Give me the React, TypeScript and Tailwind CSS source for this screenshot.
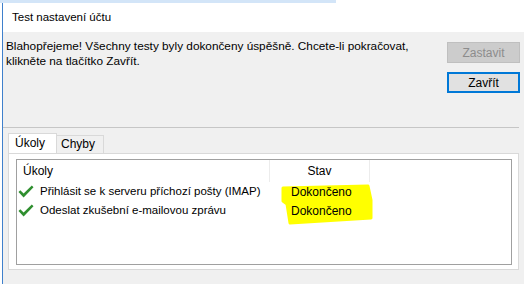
const Check = () => (
  <svg width="16" height="13" viewBox="0 0 16 13" className="shrink-0">
    <path d="M0.5 7 L2.3 5.2 L5.6 8.6 L13.8 0.5 L15.5 2.2 L5.6 12.4 Z" fill="#2f8f2f" />
  </svg>
);

const rows = ['Přihlásit se k serveru příchozí pošty (IMAP)', 'Odeslat zkušební e-mailovou zprávu'];

const App = () => {
  return (
    <div
      className="w-[524px] h-[284px] bg-white flex flex-col overflow-hidden text-[12px] text-black"
      style={{ fontFamily: '"Liberation Sans", Arial, sans-serif' }}
    >
      <div className="h-[3px] w-[336px] bg-[#d3e5f8] shrink-0" />
      <div className="flex-1 ml-[2px] border-l border-[#3f80cc] flex flex-col">
        <div className="h-[29px] bg-white flex items-center pl-[9px] text-[11.5px]">Test nastavení účtu</div>
        <div className="flex-1 bg-[#f0f0f0] flex flex-col">
          <div className="h-[95px] flex justify-between">
            <div className="pl-[3px] pt-[7px] leading-[15px] text-[11.8px] whitespace-nowrap">
              <div>Blahopřejeme! Všechny testy byly dokončeny úspěšně. Chcete-li pokračovat,</div>
              <div>klikněte na tlačítko Zavřít.</div>
            </div>
            <div className="flex flex-col gap-[9px] pt-[10px] pr-[4px]">
              <div className="w-[73px] h-[21px] bg-[#cccccc] border border-[#bfbfbf] text-[#8c8c8c] flex items-center justify-center">
                Zastavit
              </div>
              <div className="w-[73px] h-[21px] bg-[#e1e1e1] border-2 border-[#0078d7] flex items-center justify-center">
                Zavřít
              </div>
            </div>
          </div>
          <div className="h-px bg-[#c6c6c6] mr-[5px]" />
          <div className="flex items-end pl-[5px] mt-[5px] h-[20px]">
            <div className="w-[49px] h-[20px] bg-white border border-b-0 border-[#d9d9d9] pl-[6px] leading-[19px]">
              Úkoly
            </div>
            <div className="w-[47px] h-[18px] bg-[#f0f0f0] border border-l-0 border-b-0 border-[#d9d9d9] pl-[4px] leading-[17px]">
              Chyby
            </div>
          </div>
          <div className="ml-[5px] mr-[5px] h-[117px] bg-white border border-[#d9d9d9] pl-[7px] pr-[6px] pt-[5px] pb-[4px] flex">
            <div className="flex-1 border border-[#a0a0a0] relative">
              <svg className="absolute left-[263px] top-[23px]" width="96" height="44" viewBox="0 0 96 44">
                <path
                  d="M3 5 L88 3 L91 17 L91 35 L10 40 L7 21 L3 18 Z"
                  fill="#ffff00"
                  stroke="#ffff00"
                  strokeWidth="3"
                  strokeLinejoin="round"
                />
              </svg>
              <div className="relative flex h-[22px] items-center">
                <div className="w-[253px] h-full pl-[6px] flex items-center border-r border-[#ececec]">Úkoly</div>
                <div className="w-[100px] h-full flex items-center justify-center border-r border-[#ececec]">Stav</div>
              </div>
              {rows.map((r) => (
                <div key={r} className="relative flex h-[19px] items-center">
                  <div className="w-[253px] flex items-center pl-[1px] gap-[6px] whitespace-nowrap text-[11.5px]">
                    <Check />
                    <span>{r}</span>
                  </div>
                  <div className="pl-[21px]">Dokončeno</div>
                </div>
              ))}
            </div>
          </div>
        </div>
      </div>
    </div>
  );
};

export default App;
